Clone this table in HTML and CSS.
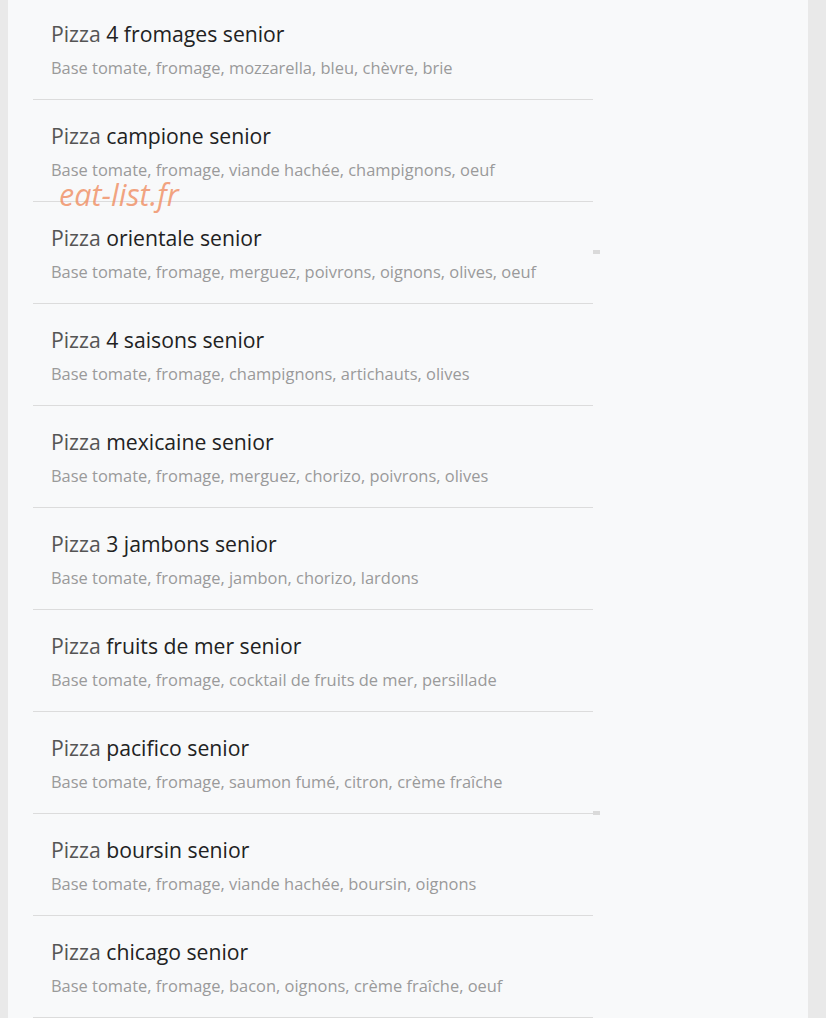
FILE: index.html
```html
<!DOCTYPE html>
<html lang="fr">
<head>
    <meta charset="UTF-8">
    <meta name="viewport" content="width=device-width, initial-scale=1.0">
    <title>Pizzas senior</title>
    <link rel="stylesheet" href="styles.css">
</head>
<body>
    <div class="panel">
        <ul class="menu-list">
            <li class="menu-item">
                <div class="item-name"><span class="prefix">Pizza</span> 4 fromages senior</div>
                <div class="item-desc">Base tomate, fromage, mozzarella, bleu, chèvre, brie</div>
            </li>
            <li class="menu-item">
                <div class="item-name"><span class="prefix">Pizza</span> campione senior</div>
                <div class="item-desc">Base tomate, fromage, viande hachée, champignons, oeuf</div>
            </li>
            <li class="menu-item">
                <div class="item-name"><span class="prefix">Pizza</span> orientale senior</div>
                <div class="item-desc">Base tomate, fromage, merguez, poivrons, oignons, olives, oeuf</div>
            </li>
            <li class="menu-item">
                <div class="item-name"><span class="prefix">Pizza</span> 4 saisons senior</div>
                <div class="item-desc">Base tomate, fromage, champignons, artichauts, olives</div>
            </li>
            <li class="menu-item">
                <div class="item-name"><span class="prefix">Pizza</span> mexicaine senior</div>
                <div class="item-desc">Base tomate, fromage, merguez, chorizo, poivrons, olives</div>
            </li>
            <li class="menu-item">
                <div class="item-name"><span class="prefix">Pizza</span> 3 jambons senior</div>
                <div class="item-desc">Base tomate, fromage, jambon, chorizo, lardons</div>
            </li>
            <li class="menu-item">
                <div class="item-name"><span class="prefix">Pizza</span> fruits de mer senior</div>
                <div class="item-desc">Base tomate, fromage, cocktail de fruits de mer, persillade</div>
            </li>
            <li class="menu-item">
                <div class="item-name"><span class="prefix">Pizza</span> pacifico senior</div>
                <div class="item-desc">Base tomate, fromage, saumon fumé, citron, crème fraîche</div>
            </li>
            <li class="menu-item">
                <div class="item-name"><span class="prefix">Pizza</span> boursin senior</div>
                <div class="item-desc">Base tomate, fromage, viande hachée, boursin, oignons</div>
            </li>
            <li class="menu-item">
                <div class="item-name"><span class="prefix">Pizza</span> chicago senior</div>
                <div class="item-desc">Base tomate, fromage, bacon, oignons, crème fraîche, oeuf</div>
            </li>
        </ul>
        <span class="mark mark-top"></span>
        <span class="mark mark-bottom"></span>
        <div class="watermark">eat-list.fr</div>
    </div>
</body>
</html>
```

FILE: styles.css
```css
body {
    margin: 0;
    padding: 0 18px 0 8px;
    background-color: #e9e9e9;
    font-family: "Open Sans", "Noto Sans", sans-serif;
}
.panel {
    position: relative;
    background-color: #f8f9fa;
    padding: 0 215px 0 25px;
    min-height: 1018px;
}
.menu-list {
    list-style: none;
    margin: 0;
    padding: 0;
    position: relative;
    top: -2px;
}
.menu-item {
    padding: 21px 18px 18px;
    border-bottom: 1px solid #dcdcdc;
}
.item-name {
    font-size: 21.2px;
    line-height: 30px;
    color: #222;
}
.item-name .prefix {
    color: #555;
}
.item-desc {
    margin-top: 6px;
    font-size: 16.45px;
    line-height: 26px;
    color: #9a9a9a;
}
.mark {
    position: absolute;
    left: 585px;
    width: 7px;
    height: 4px;
    background-color: #dadada;
}
.mark-top {
    top: 250px;
}
.mark-bottom {
    top: 811px;
}
.watermark {
    position: absolute;
    left: 51px;
    top: 173px;
    font-size: 30.5px;
    font-style: italic;
    color: rgba(240, 140, 95, 0.78);
}
```
